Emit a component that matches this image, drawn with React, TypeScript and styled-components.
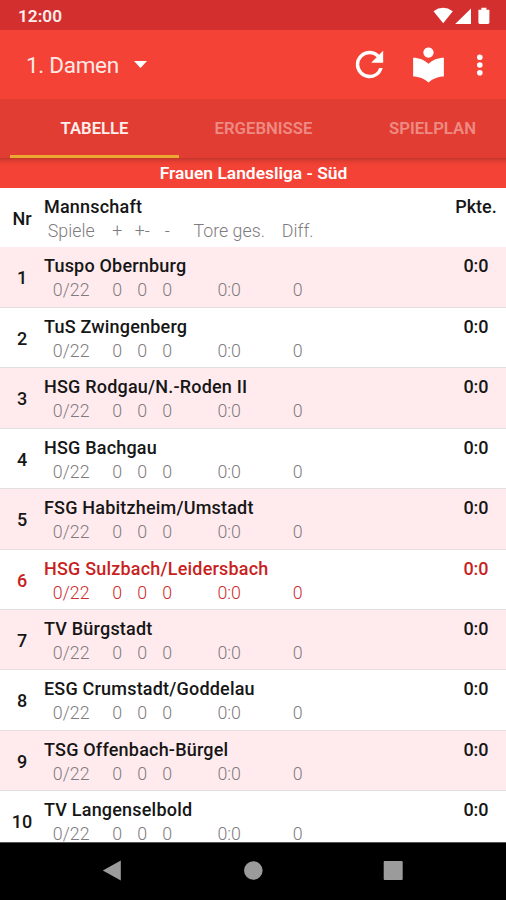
import React from 'react';
import styled, { createGlobalStyle } from 'styled-components';

const GlobalStyle = createGlobalStyle`
  * { box-sizing: border-box; }
  body { margin: 0; background: #fff; font-family: Roboto, "Liberation Sans", sans-serif; }
`;

const Screen = styled.div`
  width: 506px;
  height: 900px;
  display: flex;
  flex-direction: column;
  overflow: hidden;
  background: #fff;
`;

const StatusBar = styled.div`
  flex: none;
  height: 30px;
  padding: 2px 15px 0 18px;
  display: flex;
  align-items: center;
  justify-content: space-between;
  background: #d32f2f;
  color: #ffeeed;
  font-size: 17.2px;
  font-weight: 600;
`;

const StatusIcons = styled.svg`
  display: block;
  width: 58px;
  height: 18px;
  margin-top: -1px;
  fill: #fff;
`;

const Toolbar = styled.header`
  flex: none;
  height: 69px;
  padding: 0 22px 0 26px;
  display: flex;
  align-items: center;
  background: #f44336;
  color: #fff;
`;

const TeamPicker = styled.div`
  display: flex;
  align-items: center;
  gap: 15px;
  margin-right: auto;
  font-size: 22.5px;
  line-height: 28px;
  letter-spacing: -0.3px;
  color: #ffe9e7;
`;

const Caret = styled.svg`
  width: 13px;
  height: 7px;
  fill: #fff;
`;

const ActionIcon = styled.svg<{ $gap: number }>`
  width: 41px;
  height: 41px;
  margin-right: ${(p) => p.$gap}px;
  fill: #fff;
`;

const MoreIcon = styled.svg`
  width: 8px;
  height: 22px;
  fill: #fff;
`;

const Tabs = styled.nav`
  flex: none;
  height: 60px;
  padding-left: 10px;
  display: flex;
  background: #e23d32;
  border-bottom: 1px solid #c5362c;
`;

const Tab = styled.div<{ $active?: boolean }>`
  flex: none;
  width: 169px;
  display: flex;
  align-items: center;
  justify-content: center;
  padding-top: ${(p) => (p.$active ? 2 : 0)}px;
  padding-bottom: ${(p) => (p.$active ? 0 : 1)}px;
  border-bottom: ${(p) => (p.$active ? '3px solid #eba833' : '0')};
  color: ${(p) => (p.$active ? '#ffefed' : '#ed8b83')};
  font-size: 16.7px;
  font-weight: 600;
`;

const LeagueTitle = styled.div`
  flex: none;
  height: 28.5px;
  text-align: center;
  background: linear-gradient(#cf392e, #ec4034 4px, #f44336 8px);
  color: #fff;
  font-size: 17.4px;
  font-weight: 600;
  line-height: 29px;
  padding-left: 1px;
`;

const Table = styled.main`
  flex: 1;
  min-height: 0;
  overflow: hidden;
`;

const Row = styled.div<{ $tinted?: boolean; $own?: boolean; $head?: boolean }>`
  height: ${(p) => (p.$head ? 59.7 : 60.48)}px;
  display: flex;
  background: ${(p) => (p.$tinted ? '#ffebee' : '#fff')};
  border-bottom: ${(p) => (p.$head ? '0' : '1px solid #e3dfe0')};
  --strong: ${(p) => (p.$own ? '#c91f1f' : '#161616')};
  --soft: ${(p) => (p.$own ? '#cf2b2b' : '#807b7e')};
`;

const Rank = styled.div`
  width: 44px;
  flex: none;
  padding-top: 20px;
  text-align: center;
  font-size: 18px;
  line-height: 22px;
  font-weight: 500;
  color: var(--strong);
`;

const Details = styled.div`
  flex: 1;
  padding-top: 8px;
`;

const Team = styled.div`
  height: 24px;
  font-size: 18px;
  line-height: 22px;
  font-weight: 500;
  letter-spacing: 0.2px;
  color: var(--strong);
`;

const Stats = styled.div`
  display: flex;
  font-size: 17.8px;
  line-height: 22px;
  font-weight: 300;
  color: var(--soft);
`;

const Stat = styled.span<{ $w: number; $before?: number }>`
  width: ${(p) => p.$w}px;
  margin-left: ${(p) => p.$before ?? 0}px;
  flex: none;
  text-align: center;
  white-space: nowrap;
`;

const Points = styled.div`
  width: 60px;
  flex: none;
  padding-top: 8px;
  text-align: center;
  font-size: 18px;
  line-height: 22px;
  font-weight: 500;
  color: var(--strong);
`;

const NavBar = styled.footer`
  flex: none;
  height: 58.5px;
  border-top: 1px solid #555;
  background: #000;
  display: flex;
  align-items: center;
  justify-content: space-between;
  padding: 0 102px;
`;

const NavIcon = styled.svg`
  width: 22px;
  height: 22px;
  fill: #9b9b9b;
`;

const columns = [
  { w: 56, before: -0.8 },
  { w: 25, before: 5.5 },
  { w: 25 },
  { w: 25 },
  { w: 80, before: 9.5 },
  { w: 50, before: 3.5 },
];

const headings = ['Spiele', '+', '+-', '-', 'Tore ges.', 'Diff.'];
const blank = ['0/22', '0', '0', '0', '0:0', '0'];

const teams = [
  'Tuspo Obernburg',
  'TuS Zwingenberg',
  'HSG Rodgau/N.-Roden II',
  'HSG Bachgau',
  'FSG Habitzheim/Umstadt',
  'HSG Sulzbach/Leidersbach',
  'TV Bürgstadt',
  'ESG Crumstadt/Goddelau',
  'TSG Offenbach-Bürgel',
  'TV Langenselbold',
];
const ownTeam = 'HSG Sulzbach/Leidersbach';

function StatLine({ values }: { values: string[] }) {
  return (
    <Stats>
      {values.map((value, i) => (
        <Stat key={i} $w={columns[i].w} $before={columns[i].before}>
          {value}
        </Stat>
      ))}
    </Stats>
  );
}

export default function App() {
  return (
    <Screen>
      <GlobalStyle />
      <StatusBar>
        <span>12:00</span>
        <StatusIcons viewBox="0 0 58 18">
          <path d="M0.5 4.2Q10 -2.6 19.8 4.2L10.2 16.2Z" />
          <path d="M38 1.5V17H22.2Z" />
          <path d="M48.4 0.8h5v2h3v12.8q0 1.4-1.4 1.4h-8.2q-1.4 0-1.4-1.4V2.8h3Z" />
        </StatusIcons>
      </StatusBar>
      <Toolbar>
        <TeamPicker>
          1. Damen
          <Caret viewBox="0 0 13 7">
            <path d="M0 0H13L6.5 7Z" />
          </Caret>
        </TeamPicker>
        <ActionIcon $gap={18} viewBox="0 0 24 24">
          <path d="M17.65 6.35A7.958 7.958 0 0 0 12 4a8 8 0 1 0 7.73 10h-2.08A5.99 5.99 0 0 1 12 18a6 6 0 1 1 0-12c1.66 0 3.14.69 4.22 1.78L13 11h7V4l-2.35 2.35z" />
        </ActionIcon>
        <ActionIcon $gap={27} viewBox="0 0 24 24">
          <path d="M12 11.55C9.64 9.35 6.48 8 3 8v11c3.48 0 6.64 1.35 9 3.55 2.36-2.19 5.52-3.55 9-3.55V8c-3.48 0-6.64 1.35-9 3.55zM12 8c1.66 0 3-1.34 3-3s-1.34-3-3-3-3 1.34-3 3 1.34 3 3 3z" />
        </ActionIcon>
        <MoreIcon viewBox="0 0 8 22">
          <circle cx="3.8" cy="3.3" r="2.8" />
          <circle cx="3.8" cy="11" r="2.8" />
          <circle cx="3.8" cy="18.7" r="2.8" />
        </MoreIcon>
      </Toolbar>
      <Tabs>
        <Tab $active>TABELLE</Tab>
        <Tab>ERGEBNISSE</Tab>
        <Tab>SPIELPLAN</Tab>
      </Tabs>
      <LeagueTitle>Frauen Landesliga - Süd</LeagueTitle>
      <Table>
        <Row $head>
          <Rank>Nr</Rank>
          <Details>
            <Team>Mannschaft</Team>
            <StatLine values={headings} />
          </Details>
          <Points>Pkte.</Points>
        </Row>
        {teams.map((team, i) => (
          <Row key={team} $tinted={i % 2 === 0} $own={team === ownTeam}>
            <Rank>{i + 1}</Rank>
            <Details>
              <Team>{team}</Team>
              <StatLine values={blank} />
            </Details>
            <Points>0:0</Points>
          </Row>
        ))}
      </Table>
      <NavBar>
        <NavIcon viewBox="0 0 22 22">
          <path d="M18.8 0.5V20.5L0.8 10.5Z" />
        </NavIcon>
        <NavIcon viewBox="0 0 22 22">
          <circle cx="11.3" cy="10.5" r="9.3" />
        </NavIcon>
        <NavIcon viewBox="0 0 22 22">
          <rect x="1.7" y="1" width="19" height="19" rx="1" />
        </NavIcon>
      </NavBar>
    </Screen>
  );
}
